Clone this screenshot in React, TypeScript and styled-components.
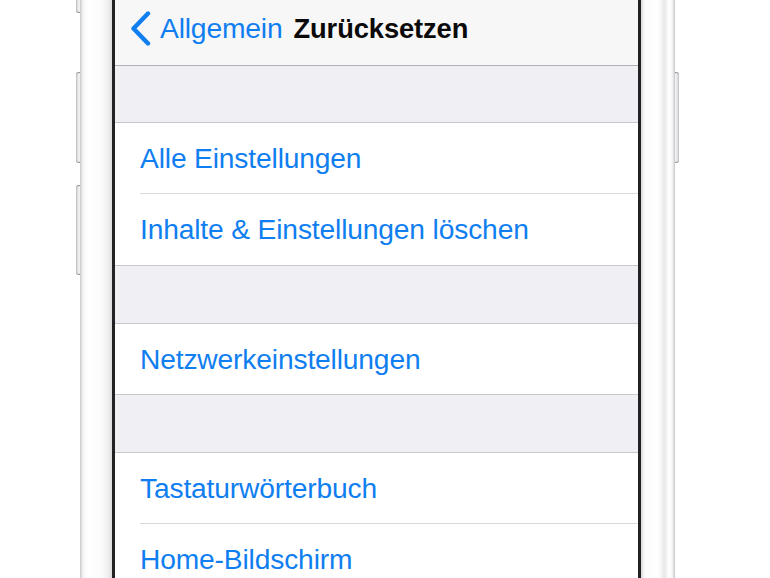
import React from "react";
import styled, { createGlobalStyle } from "styled-components";

const GlobalStyle = createGlobalStyle`
  html, body { margin: 0; padding: 0; background: #ffffff; }
  body { font-family: "Liberation Sans", Arial, sans-serif; overflow: hidden; }
`;

const Page = styled.div`
  width: 770px;
  height: 578px;
  display: flex;
  align-items: stretch;
  overflow: hidden;
  background: #ffffff;
`;

const ButtonRail = styled.div<{ $side: "left" | "right" }>`
  width: ${(p) => (p.$side === "left" ? "80px" : "5px")};
  flex: none;
  display: flex;
  flex-direction: column;
  align-items: ${(p) => (p.$side === "left" ? "flex-end" : "flex-start")};
`;

const SideButton = styled.div<{ $top: number; $height: number; $side: "left" | "right" }>`
  width: 4px;
  height: ${(p) => p.$height}px;
  margin-top: ${(p) => p.$top}px;
  flex: none;
  background: linear-gradient(
    ${(p) => (p.$side === "left" ? "90deg" : "270deg")},
    #b9b9bb 0%,
    #e6e6e8 45%,
    #f4f4f5 100%
  );
  border-radius: ${(p) => (p.$side === "left" ? "3px 0 0 3px" : "0 3px 3px 0")};
  box-shadow: inset 0 2px 1px -1px #8d8d90, inset 0 -2px 1px -1px #8d8d90;
`;

const Bezel = styled.div<{ $side: "left" | "right" }>`
  width: ${(p) => (p.$side === "left" ? "32px" : "34px")};
  flex: none;
  background: ${(p) =>
    p.$side === "left"
      ? `linear-gradient(90deg, #c9c9cb 0px, #e9e9eb 2px, #f9f9f9 4px, #ffffff 9px, #fbfbfb 22px, #eeeeef 28px, #e2e2e4 31px, #d6d6d8 32px)`
      : `linear-gradient(270deg, #bdbdbf 0px, #dcdcde 1px, #f6f6f7 3px, #ffffff 6px, #e6e6e8 11px, #f3f3f4 13px, #ffffff 18px, #fbfbfb 30px, #e4e4e6 33px, #d3d3d5 34px)`};
`;

const ScreenEdge = styled.div`
  width: 3px;
  flex: none;
  background: #222224;
`;

const Screen = styled.div`
  width: 523px;
  flex: none;
  display: flex;
  flex-direction: column;
  background: #efeff4;
  overflow: hidden;
  font-family: "Liberation Sans", Arial, sans-serif;
`;

const NavBar = styled.div`
  height: 66px;
  flex: none;
  display: flex;
  align-items: center;
  padding: 0 0 8px 14px;
  box-sizing: border-box;
  background: #f7f7f8;
  border-bottom: 1px solid #b2b2b6;
`;

const BackButton = styled.div`
  display: flex;
  align-items: center;
  gap: 8px;
  color: #0f7ef0;
  font-size: 28.3px;
  letter-spacing: -0.2px;
`;

const NavTitle = styled.div`
  margin-left: 11px;
  color: #0a0a0a;
  font-size: 27.3px;
  font-weight: 700;
  letter-spacing: -0.1px;
`;

const Spacer = styled.div<{ $h: number }>`
  height: ${(p) => p.$h}px;
  flex: none;
`;

const Group = styled.div`
  flex: none;
  background: #ffffff;
  border-top: 1px solid #c8c7cc;
  border-bottom: 1px solid #c8c7cc;
  padding-left: 25px;
`;

const Row = styled.div`
  height: 70px;
  display: flex;
  align-items: center;
  color: #0f7ef0;
  font-size: 28.2px;
  letter-spacing: -0.15px;
  & + & {
    height: 71px;
    border-top: 1px solid #d9d9dc;
  }
`;

const Chevron = () => (
  <svg width="23" height="35" viewBox="0 0 23 35" aria-hidden="true">
    <path
      d="M19 2.5 L4.5 17.5 L19 32.5"
      fill="none"
      stroke="#0f7ef0"
      strokeWidth="4.4"
      strokeLinecap="round"
      strokeLinejoin="round"
    />
  </svg>
);

const groups: string[][] = [
  ["Alle Einstellungen", "Inhalte & Einstellungen löschen"],
  ["Netzwerkeinstellungen"],
  ["Tastaturwörterbuch", "Home-Bildschirm"],
];

export default function App() {
  return (
    <>
      <GlobalStyle />
      <Page>
        <ButtonRail $side="left">
          <SideButton $side="left" $top={-4} $height={17} />
          <SideButton $side="left" $top={59} $height={91} />
          <SideButton $side="left" $top={22} $height={90} />
        </ButtonRail>
        <Bezel $side="left" />
        <ScreenEdge />
        <Screen>
          <NavBar>
            <BackButton>
              <Chevron />
              <span>Allgemein</span>
            </BackButton>
            <NavTitle>Zurücksetzen</NavTitle>
          </NavBar>
          {groups.map((rows, i) => (
            <React.Fragment key={i}>
              <Spacer $h={i === 0 ? 56 : 57} />
              <Group>
                {rows.map((label) => (
                  <Row key={label}>{label}</Row>
                ))}
              </Group>
            </React.Fragment>
          ))}
        </Screen>
        <ScreenEdge />
        <Bezel $side="right" />
        <ButtonRail $side="right">
          <SideButton $side="right" $top={72} $height={91} />
        </ButtonRail>
      </Page>
    </>
  );
}
